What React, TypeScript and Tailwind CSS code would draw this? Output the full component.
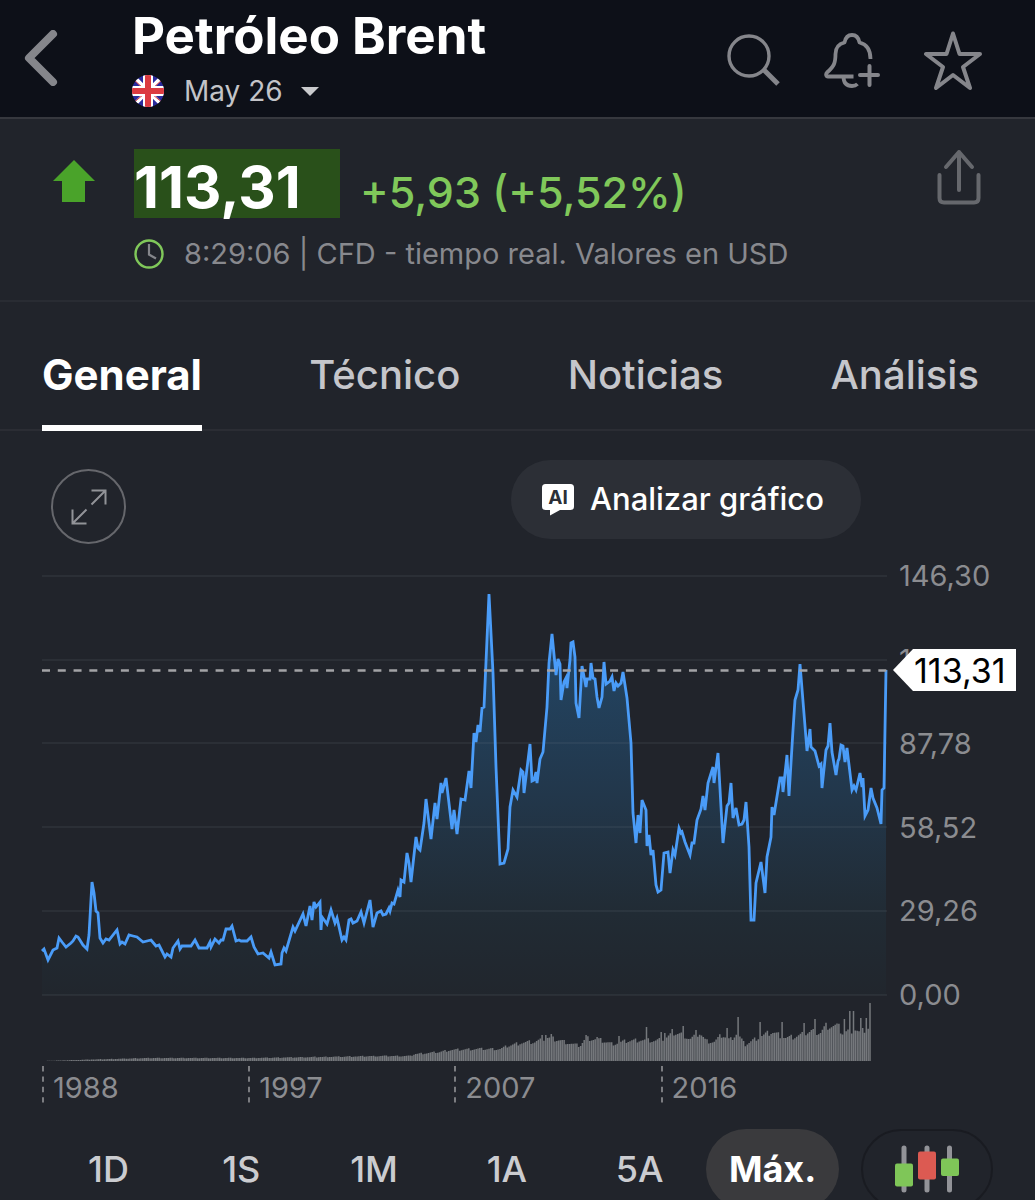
import { useState } from 'react';

const TABS = ['General', 'Técnico', 'Noticias', 'Análisis'];
const RANGES = ['1D', '1S', '1M', '1A', '5A', 'Máx.'];
const PRICE_LABELS = ['146,30', '117,04', '87,78', '58,52', '29,26', '0,00'];
const YEARS = ['1988', '1997', '2007', '2016'];

// Plot space: x 42..887, y 576 (146,30) .. 995 (0,00)
const PRICE_POINTS =
  '42,951 44,949 48,960 53,950 57,948 59,938 62,942 66,947 71,943 73,941 76,936 78,937 83,945 87,949 89,935 92,882 94,893 96,911 98,913 100,938 103,943 106,939 109,940 117,930 120,944 122,942 125,944 129,935 133,936 137,937 143,942 151,940 156,946 159,945 165,957 167,954 171,957 173,948 178,941 180,949 182,946 191,946 195,940 199,948 207,948 210,942 211,947 215,939 219,943 221,940 223,940 226,929 230,929 232,926 236,941 239,940 241,941 247,941 251,937 254,947 258,954 263,953 269,958 271,952 275,965 281,964 282,953 284,948 286,951 293,927 295,931 303,914 306,926 310,906 312,920 314,902 316,907 320,902 321,930 322,917 327,924 331,910 335,923 337,918 342,940 344,937 346,940 349,920 351,919 353,923 357,921 361,912 364,923 370,900 373,927 377,913 381,911 383,915 386,914 389,908 390,911 392,903 394,904 398,890 400,897 401,880 404,882 407,853 409,863 411,882 416,837 418,848 420,850 424,823 426,799 431,839 435,803 437,819 441,783 442,793 446,778 452,829 454,810 457,834 461,799 465,800 469,771 471,788 474,733 476,742 478,725 480,732 482,708 484,707 489,594 493,673 496,767 500,864 504,863 508,849 510,807 513,790 517,797 521,770 523,772 524,793 530,744 532,781 534,780 536,772 537,783 540,759 543,752 547,707 549,663 552,634 556,675 558,659 560,664 561,700 564,682 566,678 567,688 570,660 571,643 573,642 575,657 576,703 579,718 582,666 586,687 587,679 590,679 591,663 593,678 595,679 597,697 599,708 602,697 604,662 606,684 610,681 612,677 614,691 616,683 618,686 621,683 623,672 627,698 631,743 633,813 636,843 638,815 640,833 642,800 646,810 647,846 649,835 651,855 653,850 656,885 658,892 661,890 664,853 668,852 670,873 673,850 675,855 679,828 681,833 682,832 685,842 690,855 692,843 694,843 697,820 701,809 703,796 705,810 708,783 713,767 714,783 718,753 721,807 723,843 727,806 729,803 731,783 733,818 736,808 739,825 742,824 744,820 746,802 749,847 751,920 754,920 756,883 761,862 765,893 767,857 771,837 772,807 774,815 780,778 782,778 783,792 787,755 789,796 793,730 795,700 798,690 800,664 807,751 810,729 811,747 815,751 819,766 821,764 822,788 826,750 828,746 830,723 832,752 836,775 838,761 839,759 841,745 843,746 845,762 847,748 852,790 854,786 856,790 860,773 862,787 863,778 865,816 868,810 871,788 873,798 877,808 881,824 882,790 884,788 886,670';

// [x, bar height] knots, interpolated month by month
const VOLUME_TREND = [
  [42, 0], [60, 0.5], [92, 1.5], [150, 3], [250, 3], [320, 4], [380, 5], [410, 5], [415, 7], [440, 9],
  [450, 11], [475, 12], [500, 12], [508, 15], [520, 18], [535, 19], [548, 23], [558, 21], [572, 17],
  [580, 15], [586, 23], [600, 21], [612, 17], [628, 20], [640, 21], [655, 20], [664, 22], [674, 28],
  [682, 27], [690, 22], [700, 28], [706, 20], [714, 19], [722, 26], [730, 21], [737, 28], [745, 16],
  [757, 23], [772, 29], [786, 23], [795, 24], [812, 30], [820, 28], [826, 35], [838, 35], [842, 28],
  [855, 32], [860, 28], [866, 32], [871, 34],
];

const VOLUME_SPIKES: Record<number, number> = {
  273: 26, 275: 26, 278: 27, 297: 26, 303: 24, 315: 25, 330: 34, 338: 29, 340: 28, 344: 32, 350: 35,
  357: 31, 374: 33, 380: 44, 392: 39, 404: 39, 416: 38, 422: 42, 438: 42, 441: 50, 443: 50, 447: 43, 450: 43, 452: 58,
};

function trendAt(x: number) {
  const i = Math.max(1, VOLUME_TREND.findIndex(([kx]) => kx >= x));
  const [x0, h0] = VOLUME_TREND[i - 1];
  const [x1, h1] = VOLUME_TREND[i];
  return h0 + ((h1 - h0) * (x - x0)) / (x1 - x0);
}

const VOLUME_PATH = Array.from({ length: 453 }, (_, i) => {
  const x = 42 + (i * 828) / 452;
  const jitter = 1 + ((((i * 7919) % 13) - 6) / 6) * 0.11;
  const height = VOLUME_SPIKES[i] ?? trendAt(x) * jitter;
  return `M${x.toFixed(1)} 60V${(60 - height).toFixed(1)}`;
}).join('');

function BackIcon() {
  return (
    <svg viewBox="0 0 34 56" className="h-14 w-[34px]" fill="none" stroke="#85868b" strokeWidth="8" strokeLinecap="round" strokeLinejoin="round">
      <path d="M29 4 5 28l24 24" />
    </svg>
  );
}

function FlagIcon() {
  return (
    <svg viewBox="0 0 32 32" className="size-8 shrink-0">
      <clipPath id="flag">
        <circle cx="16" cy="16" r="16" />
      </clipPath>
      <g clipPath="url(#flag)">
        <path fill="#2a2a9c" d="M0 0h32v32H0z" />
        <path stroke="#fff" strokeWidth="4" d="m0 0 32 32M32 0 0 32" />
        <path stroke="#d8393f" strokeWidth="1" d="m0 3 12 11M32 3 20 14M0 29l12-10M32 29 20 19" />
        <path stroke="#fff" strokeWidth="10" d="M16 0v32M0 16h32" />
        <path stroke="#dc3b41" strokeWidth="6" d="M16 0v32M0 16h32" />
      </g>
    </svg>
  );
}

function SearchIcon() {
  return (
    <svg viewBox="0 0 54 54" className="size-[54px]" fill="none" stroke="#85868b">
      <circle cx="22" cy="22" r="20" strokeWidth="3.4" />
      <path strokeWidth="5" d="m36 35 15 15" />
    </svg>
  );
}

function BellPlusIcon() {
  return (
    <svg viewBox="0 0 56 56" className="size-14" fill="none" stroke="#85868b" strokeWidth="3.800" strokeLinejoin="round">
      <path d="M29.500 43.500H4C2 43.500 1.500 41 3 39.500c7-6 8.500-9.500 8.500-18.500 0-6 3-10 9-11.500C21.500 4.500 24 2 28 2s6.500 2.500 7.500 7.500c6 1.500 11 6.500 11 16.500" />
      <path d="M19.500 43.500c0 6 3 9.500 8.500 9.500 2.500 0 4-.5 5.500-2" />
      <path strokeWidth="4" strokeLinecap="round" d="M45.500 33v19M36 42h18" />
    </svg>
  );
}

function StarIcon() {
  return (
    <svg viewBox="0 0 60 60" className="size-[60px]" fill="none" stroke="#85868b" strokeWidth="4" strokeLinejoin="round">
      <path d="m30 2.500 6.500 20.500H57L40 36l7 21-17-13-17 13 7-21L3 23h20.500z" />
    </svg>
  );
}

function ShareIcon() {
  return (
    <svg viewBox="0 0 44 56" className="h-14 w-11" fill="none" stroke="#66686d" strokeWidth="4" strokeLinecap="round" strokeLinejoin="round">
      <path d="M22 3v38M9 18 22 3l13 15" />
      <path d="M2.500 26v23q0 4.500 4.500 4.500h30q4.500 0 4.500-4.500V26" />
    </svg>
  );
}

function ClockIcon() {
  return (
    <svg viewBox="0 0 30 30" className="size-[30px] shrink-0" fill="none">
      <circle cx="15" cy="15" r="13.500" stroke="#80c85a" strokeWidth="2.400" />
      <path stroke="#85868b" strokeWidth="2.200" d="M15 5v10.500l7 4" />
    </svg>
  );
}

function ExpandIcon() {
  return (
    <svg viewBox="0 0 36 36" className="size-9" fill="none" stroke="#929398" strokeWidth="2">
      <path d="M20.500 15.500 34.500 1.500M20.500 1.500h14v14M15.500 20.500 1.500 34.500M1.500 20.500v14h14" />
    </svg>
  );
}

function AiIcon() {
  return (
    <svg viewBox="0 0 32 32" className="size-8 shrink-0">
      <path fill="#fff" d="M3.500 0h25Q32 0 32 3.500v19q0 3.500-3.500 3.500H18L8 31.500V26H3.500Q0 26 0 22.500v-19Q0 0 3.500 0z" />
      <text x="16" y="20" textAnchor="middle" fill="#2c2f36" className="font-[Inter,sans-serif] text-[19px] font-bold">AI</text>
    </svg>
  );
}

function CandlesIcon() {
  return (
    <svg viewBox="0 0 64 48" className="h-12 w-16">
      <path stroke="#929398" strokeWidth="5" strokeLinecap="round" d="M9 3v42M32 3v42M54.500 3v42" />
      <rect x="0" y="18.500" width="18" height="23" rx="2" fill="#7fc658" />
      <rect x="23" y="6.500" width="18" height="28" rx="2" fill="#dc5a52" />
      <rect x="46" y="13.500" width="18" height="17.500" rx="2" fill="#7fc658" />
    </svg>
  );
}

function PriceChart() {
  return (
    <div className="pr-[19px] pl-[42px]">
      <div className="relative flex gap-3">
        <svg viewBox="42 576 845 419" preserveAspectRatio="none" className="h-[419px] min-w-0 flex-1 overflow-visible" fill="none">
          <defs>
            <linearGradient id="area" gradientUnits="userSpaceOnUse" x1="0" y1="594" x2="0" y2="995">
              <stop offset="0" stopColor="#234a6c" />
              <stop offset="0.500" stopColor="#22374b" />
              <stop offset="0.800" stopColor="#212b34" />
              <stop offset="1" stopColor="#21262d" />
            </linearGradient>
          </defs>
          <polygon points={`42,995 ${PRICE_POINTS} 886,995`} fill="url(#area)" />
          <path stroke="#8a93a0" strokeOpacity="0.100" strokeWidth="2" d="M42 576h845M42 660h845M42 743h845M42 827h845M42 911h845M42 995h845" />
          <polyline points={PRICE_POINTS} stroke="#4a9cf8" strokeWidth="2.800" strokeLinejoin="miter" />
          <path stroke="#a3a3a6" strokeWidth="2.500" strokeDasharray="8 7.780" d="M42 670.500h845" />
        </svg>
        <div className="flex h-[419px] w-[117px] flex-col justify-between text-[29px] text-[#8b8c90]">
          {PRICE_LABELS.map(label => (
            <span key={label} className="flex h-0 items-center">{label}</span>
          ))}
        </div>
        {/* Current price marker */}
        <div className="absolute top-[73px] right-0 flex h-[42px] w-[123px] items-center bg-white pl-[21px] text-[34px] text-black [clip-path:polygon(0_50%,20px_0,100%_0,100%_100%,20px_100%)]">
          113,31
        </div>
      </div>

      <div className="pt-[6px] pr-[129px]">
        <svg viewBox="42 0 845 60" preserveAspectRatio="none" className="h-[60px] w-full" fill="none">
          <path d={VOLUME_PATH} stroke="#75787c" strokeWidth="1.500" />
        </svg>
        <div className="flex pt-[5px]">
          {YEARS.map(year => (
            <div key={year} className="flex w-[24.4%] items-start gap-[9px] text-[29px] leading-[44px] text-[#8b8c90]">
              <svg viewBox="0 0 2 38" className="h-[38px] w-[2px]">
                <path stroke="#a3a3a6" strokeWidth="1.400" strokeDasharray="5.400 5" d="M1 0v37" />
              </svg>
              {year}
            </div>
          ))}
        </div>
      </div>
    </div>
  );
}

export default function App() {
  const [activeTab, setActiveTab] = useState('General');
  const [activeRange, setActiveRange] = useState('Máx.');

  return (
    <div className="flex h-screen flex-col overflow-hidden bg-[#21242b] font-[Inter,'Liberation_Sans',sans-serif]">

      {/* Header */}
      <header className="flex h-[119px] shrink-0 items-start border-b-2 border-[#36383e] bg-[#0d1018] pr-[52px] pl-6">
        <button aria-label="Volver" className="mt-[30px] w-[108px]">
          <BackIcon />
        </button>
        <div className="flex-1 pt-2">
          <h1 className="text-[51px] leading-[56px] font-bold text-white">Petróleo Brent</h1>
          <button className="mt-[9px] flex h-9 items-center text-[28px] text-[#c3c4c8]">
            <FlagIcon />
            <span className="ml-5">May 26</span>
            <svg viewBox="0 0 18 9" className="ml-[18px] h-[9px] w-[18px]" fill="#c9cacd">
              <path d="M0 0h18L9 9z" />
            </svg>
          </button>
        </div>
        <div className="mt-[31px] flex gap-[43px]">
          <button aria-label="Buscar"><SearchIcon /></button>
          <button aria-label="Crear alerta"><BellPlusIcon /></button>
          <button aria-label="Favorito"><StarIcon /></button>
        </div>
      </header>

      <main className="min-h-0 flex-1 overflow-y-auto [scrollbar-width:none]">

        {/* Quote */}
        <section className="flex h-[183px] items-start border-b-2 border-[#292c33] pt-[30px] pr-[54px] pl-[53px]">
          <svg viewBox="0 0 42 42" className="mt-[11px] mr-[39px] size-[42px]" fill="#4aa32a">
            <path d="M21 0 42 21H32v21H9V21H0z" />
          </svg>
          <div className="flex-1">
            <div className="flex items-center gap-5">
              <strong className="h-[69px] w-[206px] bg-[#29501a] text-[58px] leading-[76px] text-white">113,31</strong>
              <span className="pt-4 text-[43px] leading-[52px] font-medium text-[#80c85a]">+5,93 (+5,52%)</span>
            </div>
            <p className="mt-[18px] flex items-center gap-5 text-[29px] leading-9 text-[#88898e]">
              <ClockIcon />
              8:29:06 | CFD - tiempo real. Valores en USD
            </p>
          </div>
          <button aria-label="Compartir"><ShareIcon /></button>
        </section>

        {/* Tabs */}
        <nav className="flex h-[129px] items-end justify-between border-b-2 border-[#2b2d34] pr-[56px] pl-[42px]">
          {TABS.map(tab => (
            <button
              key={tab}
              onClick={() => setActiveTab(tab)}
              className={`-mb-[2px] flex h-[82px] items-start border-b-[6px] leading-[52px] ${tab === activeTab ? 'border-white text-[42px] font-bold text-white' : 'border-transparent text-[40px] font-medium text-[#c5c6cb]'}`}
            >
              {tab}
            </button>
          ))}
        </nav>

        {/* Chart actions */}
        <div className="flex items-center justify-between pt-[29px] pr-[174px] pl-[51px]">
          <button aria-label="Ampliar gráfico" className="mt-1 flex size-[75px] items-center justify-center rounded-full border-2 border-[#66676c]">
            <ExpandIcon />
          </button>
          <button className="mb-[10px] flex h-[79px] w-[350px] items-center gap-4 rounded-full bg-[#2c2f36] pl-[31px] text-[31px] font-medium text-white">
            <AiIcon />
            Analizar gráfico
          </button>
        </div>

        <div className="pt-[27px]">
          <PriceChart />
        </div>

        {/* Ranges */}
        <div className="flex gap-[22px] pt-[19px] pr-[42px] pl-[42px]">
          <div className="grid flex-1 grid-cols-6">
            {RANGES.map(range => (
              <button
                key={range}
                onClick={() => setActiveRange(range)}
                className={`h-[80px] rounded-full text-[36px] ${range === activeRange ? 'bg-[#3a3a3d] font-bold text-white' : 'font-medium text-[#cbccd0]'}`}
              >
                {range}
              </button>
            ))}
          </div>
          <button aria-label="Tipo de gráfico" className="flex h-[80px] w-[132px] items-center justify-center rounded-full border-2 border-[#191b21]">
            <CandlesIcon />
          </button>
        </div>
      </main>
    </div>
  );
}
